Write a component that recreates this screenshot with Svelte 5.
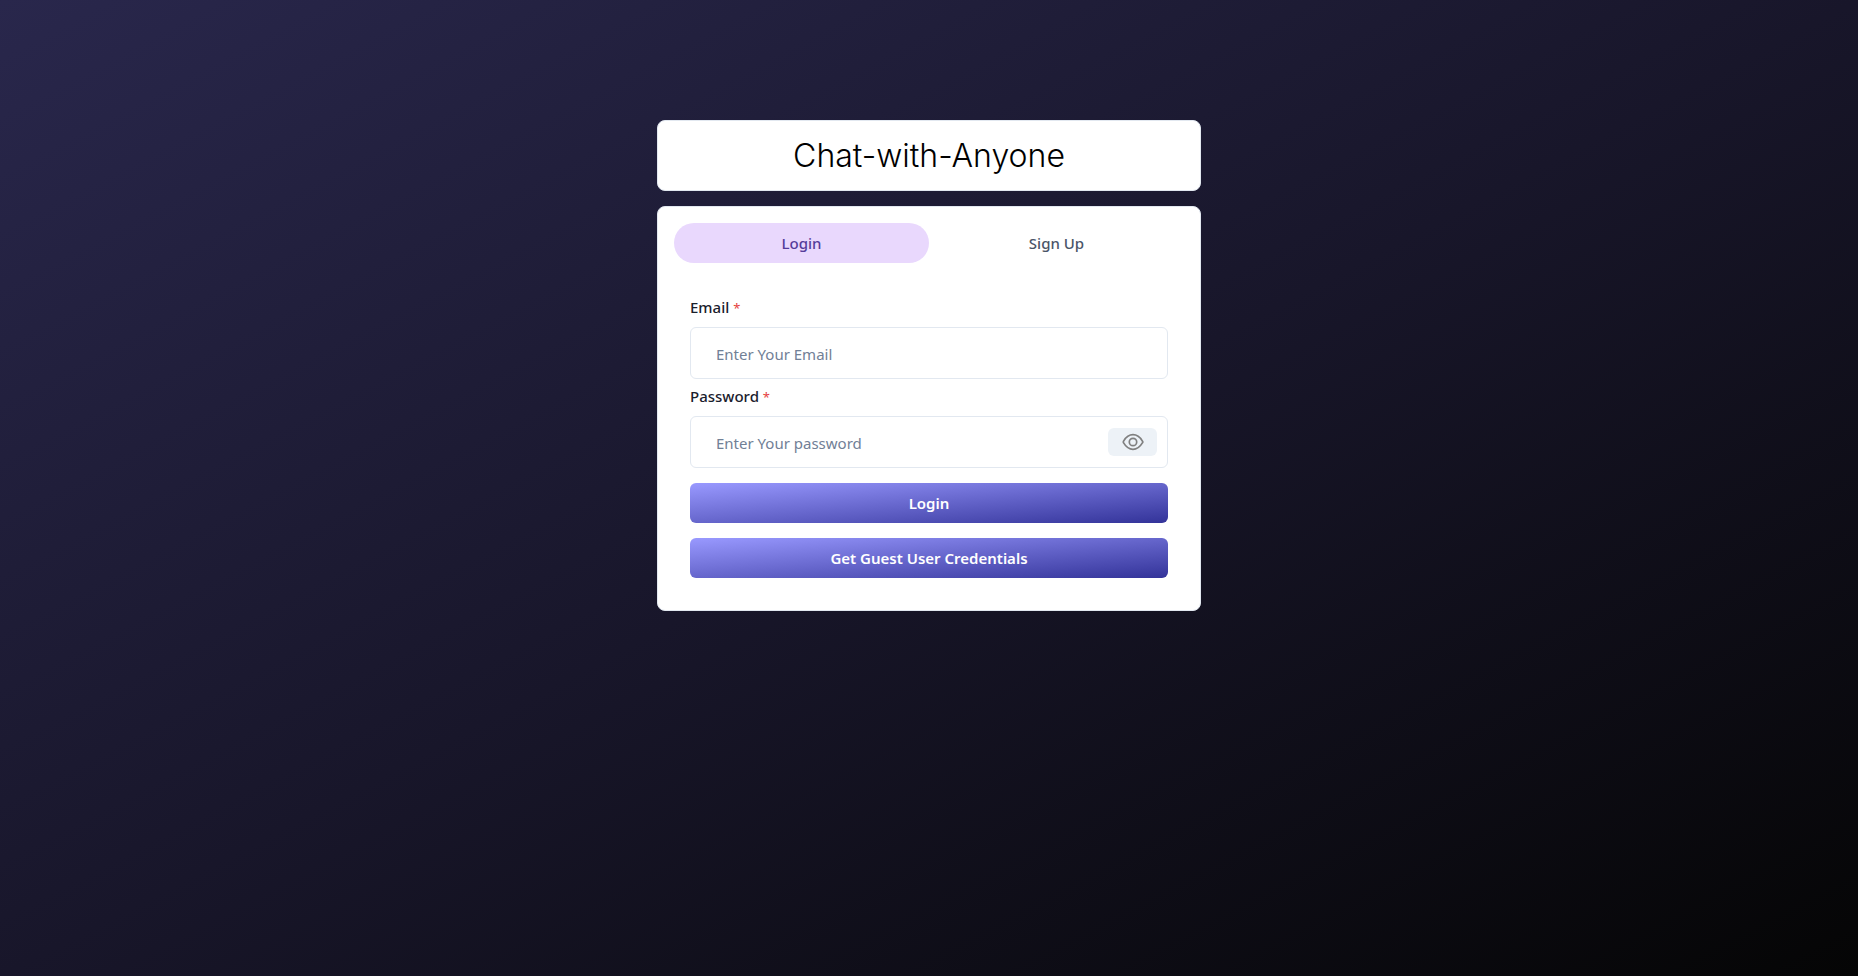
<script>
  let tab = $state('login');
  let show = $state(false);
  let email = $state('');
  let password = $state('');

  function fillGuest() {
    email = 'guest@example.com';
    password = '123456';
  }
</script>

<main>
  <header class="card title">
    <h1>Chat-with-Anyone</h1>
  </header>

  <section class="card">
    <div class="tabs" role="tablist">
      <button role="tab" class:active={tab === 'login'} aria-selected={tab === 'login'} onclick={() => (tab = 'login')}>Login</button>
      <button role="tab" class:active={tab === 'signup'} aria-selected={tab === 'signup'} onclick={() => (tab = 'signup')}>Sign Up</button>
    </div>

    <form onsubmit={(e) => e.preventDefault()}>
      <div class="field">
        <label for="email">Email <span>*</span></label>
        <input id="email" type="email" placeholder="Enter Your Email" bind:value={email} />
      </div>
      <div class="field">
        <label for="password">Password <span>*</span></label>
        <div class="group">
          <input id="password" type={show ? 'text' : 'password'} placeholder="Enter Your password" bind:value={password} />
          <button type="button" class="eye" aria-label="Toggle password visibility" onclick={() => (show = !show)}>
            <svg viewBox="0 0 24 24" width="24" height="24" fill="none" stroke="currentColor" stroke-width="1.700">
              <path d="M21.400 11.100c.6.600.6 1.200 0 1.800C19.600 15.900 16.200 19.300 12 19.300s-7.600-3.400-9.400-6.400c-.5-.6-.5-1.200 0-1.800C4.400 8.100 7.800 4.700 12 4.700s7.600 3.400 9.400 6.400Z" />
              <circle cx="12" cy="12" r="3.700" />
            </svg>
          </button>
        </div>
      </div>
      <div class="actions">
        <button type="submit">Login</button>
        <button type="button" onclick={fillGuest}>Get Guest User Credentials</button>
      </div>
    </form>
  </section>
</main>

<style>
  :global(body) {
    min-height: 100vh;
    background: linear-gradient(to bottom right, #29274c, #18162a 50%, #050505);
  }

  main {
    box-sizing: border-box;
    max-width: 576px;
    margin: 0 auto;
    padding: 120px 16px 40px;
    display: flex;
    flex-direction: column;
    gap: 15px;
    font: 15px/24px "Noto Sans", sans-serif;
    color: #1a202c;
  }

  .card {
    padding: 16px;
    background: #fff;
    border: 1px solid #e2e8f0;
    border-radius: 8px;
  }

  .title {
    padding: 12px;
    text-align: center;
  }

  h1 {
    margin: 0;
    font: 300 32px/45px Inter, sans-serif;
    color: #000;
  }

  button,
  input {
    font: inherit;
    border: 0;
  }

  button {
    cursor: pointer;
  }

  .tabs {
    display: flex;
    margin-bottom: 16px;
  }

  .tabs button {
    flex: 1;
    height: 40px;
    border-radius: 20px;
    background: none;
    color: #4a5568;
    font-weight: 500;
  }

  .tabs .active {
    background: #e9d8fd;
    color: #553c9a;
  }

  form {
    padding: 16px;
    display: flex;
    flex-direction: column;
    gap: 5px;
  }

  label {
    display: block;
    margin-bottom: 8px;
    font-weight: 500;
  }

  label span {
    color: #e53e3e;
    font-size: 13px;
    font-weight: 400;
    line-height: 1;
  }

  input {
    box-sizing: border-box;
    display: block;
    width: 100%;
    height: 52px;
    padding: 2px 25px 0;
    border: 1px solid #e2e8f0;
    border-radius: 6px;
    background: #fff;
    color: inherit;
  }

  input::placeholder {
    color: #718096;
    opacity: 1;
  }

  .group {
    position: relative;
  }

  .group input {
    padding-right: 64px;
  }

  .eye {
    position: absolute;
    top: 12px;
    right: 11px;
    width: 49px;
    height: 28px;
    padding: 0;
    display: grid;
    place-items: center;
    border-radius: 6px;
    background: #edf2f7;
    color: #808080;
  }

  .actions {
    margin-top: 10px;
    display: flex;
    flex-direction: column;
    gap: 15px;
  }

  .actions button {
    height: 40px;
    border-radius: 6px;
    background: linear-gradient(to bottom right, #9999ff, #333399);
    color: #fff;
    font-weight: 600;
  }
</style>
